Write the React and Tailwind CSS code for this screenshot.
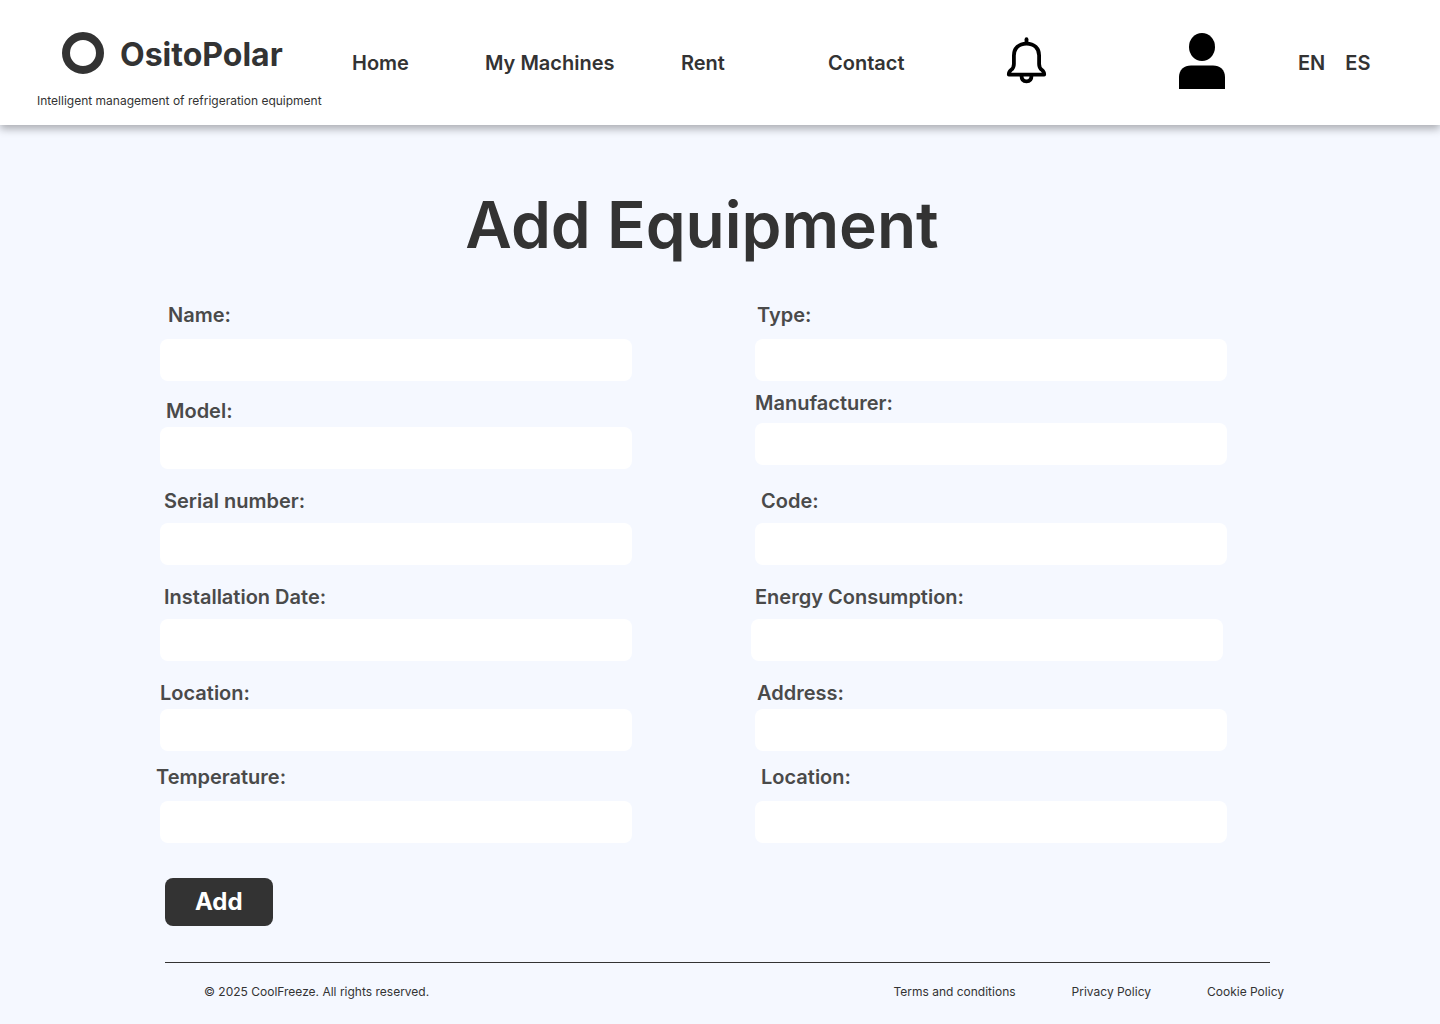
const leftFields = [
  { id: "name", label: "Name:", field: "gap-3", indent: "pl-2" },
  { id: "model", label: "Model:", field: "mt-[18px] gap-1", indent: "pl-1.5" },
  { id: "serial", label: "Serial number:", field: "mt-5 gap-2.5", indent: "pl-1" },
  { id: "installed", label: "Installation Date:", field: "mt-5 gap-2.5", indent: "pl-1" },
  { id: "location", label: "Location:", field: "mt-5 gap-1", indent: "pl-0" },
  { id: "temperature", label: "Temperature:", field: "mt-3.5 gap-3", indent: "-ml-1" },
];

const rightFields = [
  { id: "type", label: "Type:", field: "gap-3", indent: "pl-0.5" },
  { id: "manufacturer", label: "Manufacturer:", field: "mt-2.5 gap-2", indent: "pl-0" },
  { id: "code", label: "Code:", field: "mt-6 gap-2.5", indent: "pl-1.5" },
  { id: "energy", label: "Energy Consumption:", field: "mt-5 gap-2.5 -ml-1 mr-1", indent: "pl-1" },
  { id: "address", label: "Address:", field: "mt-5 gap-1", indent: "pl-0.5" },
  { id: "site", label: "Location:", field: "mt-3.5 gap-3", indent: "pl-1.5" },
];

function FieldColumn({ fields }) {
  return (
    <div className="flex flex-col">
      {fields.map((f) => (
        <div key={f.id} className={`flex flex-col ${f.field}`}>
          <label htmlFor={f.id} className={`text-xl leading-6 font-semibold text-[#4a4a4a] ${f.indent}`}>
            {f.label}
          </label>
          <input id={f.id} type="text" className="h-[42px] w-full rounded-lg bg-white px-3 text-base" />
        </div>
      ))}
    </div>
  );
}

function Bell() {
  return (
    <svg width="42" height="48" viewBox="0 0 42 48" fill="none" stroke="#000" strokeWidth="3.8" strokeLinecap="round" strokeLinejoin="round" aria-hidden="true">
      <path d="M20.5 3.2V7" />
      <path d="M20.5 7.6C12.6 7.6 7.9 12.6 7.9 19.4V28C7.9 31 7.2 32.6 5 34C3.4 35.2 2.8 36.4 2.8 38.6H38.2C38.2 36.4 37.6 35.2 36 34C33.8 32.6 33.1 31 33.1 28V19.4C33.1 12.6 28.4 7.6 20.5 7.6Z" />
      <path d="M15.5 39.5C15.5 43.4 17.5 45.4 20.5 45.4S25.5 43.4 25.5 39.5" />
    </svg>
  );
}

function Person() {
  return (
    <svg width="46" height="56" viewBox="0 0 46 56" fill="#000" aria-hidden="true">
      <ellipse cx="23" cy="14" rx="13" ry="14" />
      <path d="M0 56V44C0 37 5 32.6 12 32.6H34C41 32.6 46 37 46 44V56Z" />
    </svg>
  );
}

export default function App() {
  return (
    <div className="min-h-screen bg-[#f5f8ff] font-['Inter',sans-serif] text-[#333]">
      <header className="bg-white pb-4 shadow-[0_4px_8px_rgba(0,0,0,0.3)]">
        <nav className="grid grid-cols-[352fr_133fr_196fr_147fr_178fr_173fr_119fr_142fr] text-xl leading-6 font-semibold">
          <div className="pt-8 pl-[37px]">
            <a href="#home" className="flex items-center gap-4 pl-[25px]">
              <svg width="42" height="42" viewBox="0 0 42 42" fill="none" aria-hidden="true">
                <circle cx="21" cy="21" r="17" stroke="#333" strokeWidth="8" />
              </svg>
              <span className="pt-1 text-[32px] leading-9 font-bold">OsitoPolar</span>
            </a>
            <p className="mt-[19px] text-xs leading-4 font-normal whitespace-nowrap">
              Intelligent management of refrigeration equipment
            </p>
          </div>
          <a href="#home" className="pt-[51px]">Home</a>
          <a href="#machines" className="pt-[51px] whitespace-nowrap">My Machines</a>
          <a href="#rent" className="pt-[51px]">Rent</a>
          <a href="#contact" className="pt-[51px]">Contact</a>
          <button type="button" aria-label="Notifications" className="flex items-start pt-9">
            <Bell />
          </button>
          <button type="button" aria-label="Profile" className="flex items-start pt-[33px]">
            <Person />
          </button>
          <div className="flex items-start gap-5 pt-[51px]">
            <button type="button">EN</button>
            <button type="button">ES</button>
          </div>
        </nav>
      </header>

      <main className="pt-[60px]">
        <h1 className="pr-9 text-center text-[64px] leading-20 font-semibold">Add Equipment</h1>
        <form className="mt-[38px] pr-[213px] pl-40" onSubmit={(e) => e.preventDefault()}>
          <div className="grid grid-cols-2 gap-x-[123px]">
            <FieldColumn fields={leftFields} />
            <FieldColumn fields={rightFields} />
          </div>
          <button type="submit" className="mt-[35px] ml-[5px] h-12 rounded-lg bg-[#333] px-[30px] text-2xl font-bold text-white">
            Add
          </button>
        </form>
      </main>

      <footer className="mt-9 pb-6 text-xs leading-4">
        <hr className="mr-[170px] ml-[165px] border-[#333]" />
        <div className="mt-[21px] flex justify-between pr-[156px] pl-[204px]">
          <p>© 2025 CoolFreeze. All rights reserved.</p>
          <div className="flex gap-14">
            <a href="#terms">Terms and conditions</a>
            <a href="#privacy">Privacy Policy</a>
            <a href="#cookies">Cookie Policy</a>
          </div>
        </div>
      </footer>
    </div>
  );
}
